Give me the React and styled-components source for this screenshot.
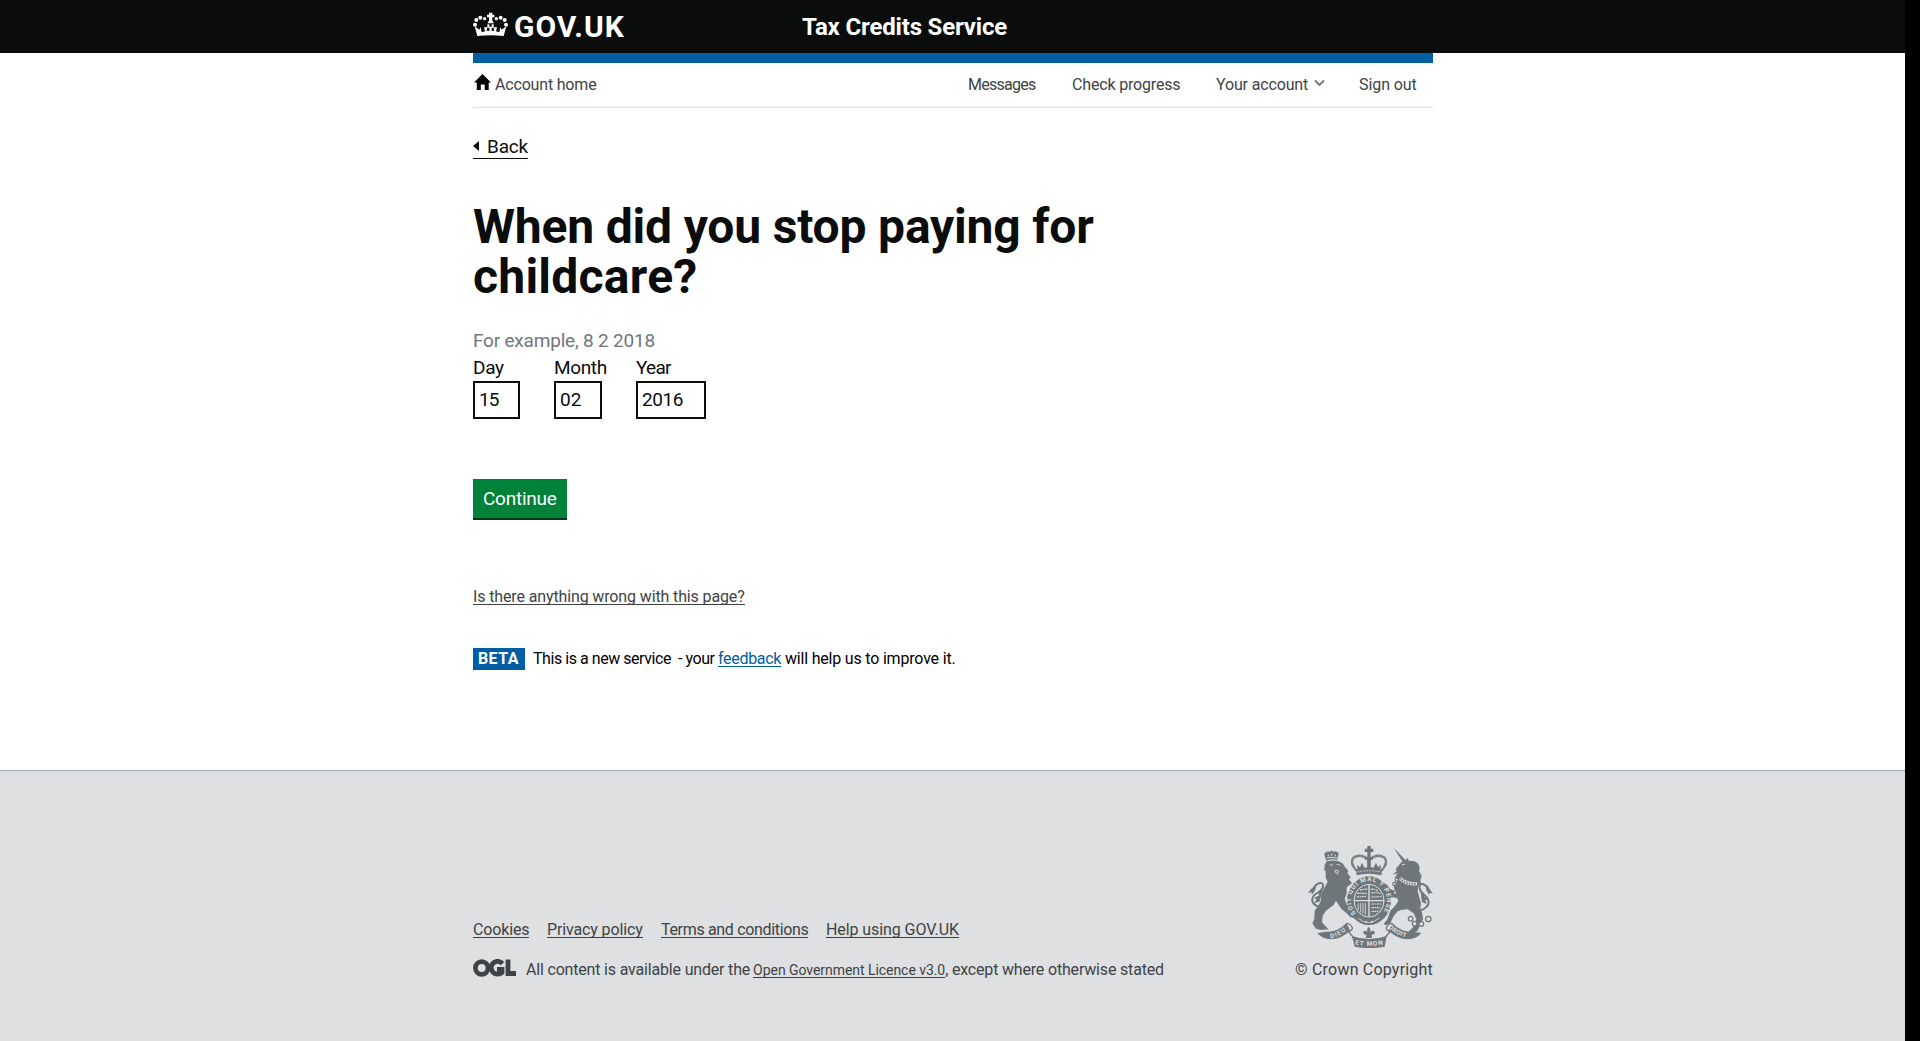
import React from "react";
import styled, { createGlobalStyle } from "styled-components";

const Global = createGlobalStyle`
  *, *::before, *::after { box-sizing: border-box; }
  body { margin: 0; background: #fff; }
`;

const Screen = styled.div`
  display: grid;
  grid-template-columns: 1fr 15px;
  height: 1041px;
  overflow: hidden;
  font-family: Roboto, "Liberation Sans", sans-serif;
  font-size: 16px;
  color: #0b0c0c;
  background: #fff;
`;
const ScrollTrack = styled.div`background: #000;`;
const Page = styled.div`
  display: flex;
  flex-direction: column;
  min-width: 0;
`;
const Container = styled.div`
  width: 960px;
  margin: 0 472px 0 473px;
`;

const T = styled.span`
  letter-spacing: ${(p) => p.$track || 0}px;
  white-space: pre;
`;

const Header = styled.header`
  background: #0b0c0c;
  height: 53px;
`;
const HeaderRow = styled(Container)`
  display: grid;
  grid-template-columns: 329px 1fr;
  height: 53px;
  color: #fff;
  font-weight: 700;
`;
const Logo = styled.div`
  display: flex;
  gap: 6px;
  font-size: 30px;
  line-height: 54px;
  svg { display: block; margin-top: 12px; flex: none; }
`;
const ServiceName = styled.div`
  font-size: 24px;
  line-height: 54px;
`;
const BlueBar = styled.div`
  height: 10px;
  background: #005ea5;
`;
const Nav = styled.nav`
  display: grid;
  grid-template-columns: 495px 104px 144px 143px 74px;
  height: 45px;
  border-bottom: 1px solid #dee0e2;
  line-height: 43px;
  color: #404345;
`;
const NavItem = styled.div`
  display: flex;
  svg { display: block; flex: none; }
`;
const HomeItem = styled(NavItem)`
  gap: 4px;
  svg { margin: 11px 0 0 1px; }
`;
const MenuItem = styled(NavItem)`
  gap: 6px;
  svg { margin-top: 16px; }
`;

const Main = styled.main`
  height: 662px;
  padding-top: 25px;
`;
const BackLink = styled.div`
  display: flex;
  gap: 8px;
  width: 55px;
  height: 26px;
  font-size: 19px;
  line-height: 27px;
  border-bottom: 1px solid #0b0c0c;
  svg { display: block; flex: none; margin-top: 8px; }
`;
const Title = styled.h1`
  margin: 43px 0 0;
  font-size: 48px;
  line-height: 50px;
  font-weight: 700;
`;
const TitleLine = styled(T)`
  display: block;
`;
const Hint = styled.div`
  margin-top: 25px;
  font-size: 19px;
  line-height: 27px;
  color: #6f777b;
`;
const DateRow = styled.div`
  display: grid;
  grid-template-columns: 81px 82px 70px;
  font-size: 19px;
  line-height: 27px;
`;
const Field = styled.label`
  display: block;
`;
const Box = styled.div`
  width: ${(p) => p.$w}px;
  height: 38px;
  padding-left: 4px;
  border: 2px solid #0b0c0c;
  line-height: 33px;
`;
const Button = styled.div`
  width: 94px;
  height: 39px;
  margin-top: 60px;
  padding-left: 10px;
  background: #00823b;
  box-shadow: 0 2px 0 #003618;
  color: #fff;
  font-size: 19px;
  line-height: 40px;
`;
const Line = styled.div`
  width: fit-content;
  height: 17px;
  line-height: 17px;
  border-bottom: 1px solid;
`;
const Help = styled(Line)`
  margin-top: 70px;
  color: #404345;
`;
const BetaRow = styled.div`
  display: flex;
  margin-top: 43px;
  line-height: 22px;
  color: #000;
`;
const Tag = styled.strong`
  width: 52px;
  height: 22px;
  margin-right: 8px;
  padding-left: 5px;
  background: #005ea5;
  color: #fff;
`;
const Feedback = styled.span`
  color: #005ea5;
  height: 19px;
  border-bottom: 1px solid;
`;

const Footer = styled.footer`
  flex: 1;
  background: #dee0e2;
  border-top: 1px solid #a1acb2;
  color: #404345;
`;
const FooterRow = styled(Container)`
  display: flex;
  justify-content: space-between;
  padding-top: 75px;
`;
const FooterLeft = styled.div`padding-top: 75px;`;
const Links = styled.div`
  display: grid;
  grid-template-columns: 74px 114px 165px 140px;
`;
const Licence = styled.div`
  display: flex;
  margin-top: 19px;
  line-height: 25px;
  svg { display: block; margin: 2px 10px 0 0; }
`;
const LicenceLink = styled.span`
  height: 21px;
  margin-left: 3px;
  font-size: 14px;
  line-height: 26px;
  border-bottom: 1px solid;
`;
const Copyright = styled.div`
  display: flex;
  flex-direction: column;
  align-items: flex-end;
  line-height: 25px;
  svg { display: block; margin-bottom: 9px; }
`;

function Crown() {
  return (
    <svg width="35" height="26" viewBox="0 0 105 78" fill="#fff">
      <path d="M13 72 5 43l14 10 4-8 3 16 10-3-3-12h10l-2 10 8 1V47h-6V37h6v7h7v-7h6v10h-6v10l8-1-2-10h10l-3 12 10 3 3-16 4 8 14-10-8 29Q53 67 13 72z" />
      <path d="M48 2h10v6h6v8h-6v10l5 8H43l5-8V16h-6V8h6z" />
      <g>
        <circle cx="6" cy="38" r="6" /><circle cx="10" cy="24" r="6" /><circle cx="22" cy="17" r="6" /><circle cx="35" cy="20" r="5" />
        <circle cx="99" cy="38" r="6" /><circle cx="95" cy="24" r="6" /><circle cx="83" cy="17" r="6" /><circle cx="70" cy="20" r="5" />
      </g>
    </svg>
  );
}
function House() {
  return (
    <svg width="17" height="16" viewBox="0 0 17 16"><path fill="#000" d="M8.500 0 17 8.500h-2.300V16h-4v-5.500H6.800V16h-4V8.500H0z" /></svg>
  );
}
function Ogl() {
  return (
    <svg width="43" height="18" viewBox="0 0 43 18" fill="none" stroke="#404345" strokeWidth="4.800">
      <circle cx="8.700" cy="9" r="6.300" />
      <path d="M29.500 4.600A6.400 6.400 0 1 0 29 13.400V10.500h-5" />
      <path d="M35 .5v14h8" />
    </svg>
  );
}
function Crest() {
  return (
    <svg width="125" height="102" viewBox="84 48 375 306" fill="#6f777b">
      {/* lion */}
      <g>
        <path d="M139 92l-6-18q-1-8 8-8 2-4 8 0l4-4 4 0 4 4q7-4 9 0 8 0 5 9l-4 15q-16-5-32 2z" />
        <path d="M134 104l6-10q18-5 35-1l14 8 6 10 10 12-3 6 10 13-5 6 9 12-16 12 0 18-6 16 4 12 6 12 12 12 16 6 12 10-8 8-24-4-14-14-14-12-16-24-8 14-22 16-10 16-2 18 6 8 14 14-24 2-14-4-11-16 6-14 1-24 12-16 6-12 2-24 10-18 9-16-6-14 0-20-4 0z" />
        <path d="M118 232C82 216 98 196 116 186S134 150 112 162Q102 168 99 182" fill="none" stroke="#6f777b" strokeWidth="6" />
        <path d="M84 190l8-12 16-12-2 14-10 14-2-8z" />
        <path d="M128 180l-14 10 4 6-16 8 8 4-8 10 16-2z" />
      </g>
      <path d="M148 106q6-4 11 0M170 104q7-3 11 3M166 120l9 2-2 10-8-6z" stroke="#dee0e2" strokeWidth="2.500" fill="none" />
      <path d="M140 84q15-4 31 0M145 74v5M155 70v7M166 74v5" stroke="#dee0e2" strokeWidth="3" fill="none" />
      {/* unicorn */}
      <g>
        <path d="M341 53l38 40-8 7z" />
        <path d="M350 124l-3-8 18-20 12-4 4-9 6 9q20-1 28 10l4 12-2 8 8 16-4 12 2 8-8 10-2 16 4 14 6 22-2 16 6 16 2 16-8 14-8 20-18 8-10-4 14-14 10-24-8-18-18-12-20 2-10 4-12 14-10 22-14 6-6-4 12-16 8-24 16-16 8-14-4-8-16-2-16 8-6 12-10-6 2-12 22-12-18-6-8-16-8-4 6-8 20 4 12 16 14 4-4-12 10-14-6-14 8-12-16 4z" />
        <path d="M420 242C460 226 446 206 430 192S414 152 436 166Q446 172 446 184" fill="none" stroke="#6f777b" strokeWidth="6" />
        <path d="M459 192l-8-12-14-14 2 14 8 14 4-6z" />
        <path d="M422 186l12 8-2 6 12 8-8 2 4 12-14-6z" />
      </g>
      <path d="M359 145q22 20 52 16" stroke="#dee0e2" strokeWidth="10" fill="none" />
      <path d="M359 145q22 20 52 16" stroke="#6f777b" strokeWidth="6" strokeDasharray="4 4" fill="none" />
      <path d="M366 105l9-3" stroke="#dee0e2" strokeWidth="3" />
      <g fill="#dee0e2" stroke="#6f777b" strokeWidth="3.500">
        <circle cx="392" cy="266" r="7" /><circle cx="404" cy="281" r="7" /><circle cx="424" cy="282" r="7" /><circle cx="445" cy="267" r="8" />
        <circle cx="350" cy="149" r="5" /><circle cx="343" cy="162" r="5" /><circle cx="345" cy="188" r="5" />
      </g>
      {/* crown */}
      <path d="M230 122q-22-24-10-39 24-14 46 7v30M304 122q22-24 10-39-24-14-46 7v30" fill="none" stroke="#6f777b" strokeWidth="7" />
      <path d="M230 122q-22-24-10-39 24-14 46 7M304 122q22-24 10-39-24-14-46 7" fill="none" stroke="#dee0e2" strokeWidth="1.800" strokeDasharray="2 4" />
      <path d="M262 48h10v8h8v10h-8v16h6v8h-6v30h-10V90h-6v-8h6V66h-8V56h8z" />
      <path d="M232 122l0-18 8 8 6-14 8 16 13-5 13 5 8-16 6 14 8-8v18z" />
      <path d="M228 121q40-9 78 0l-2 15q-36-9-74 0z" />
      <path d="M232 126q36-8 70 0" stroke="#dee0e2" strokeWidth="2.500" strokeDasharray="6 3" fill="none" />
      {/* garter and shield */}
      <ellipse cx="267" cy="212" rx="66" ry="73" />
      <ellipse cx="267" cy="212" rx="45" ry="49" fill="none" stroke="#dee0e2" strokeWidth="3" />
      <path d="M267 164v96M223 212h88" stroke="#dee0e2" strokeWidth="4" />
      <g stroke="#dee0e2" strokeWidth="3.500" strokeDasharray="7 2 4 2" fill="none">
        <path d="M240 180l22-3M232 190l28 0M230 201l30-2M272 178q14-2 22 6M274 190q14-6 29 2M274 201l32-1" />
        <path d="M275 222h31M275 233h27M275 244h20" />
      </g>
      <path d="M235 220v20M242 219v28M249 219v32M256 219v34" stroke="#dee0e2" strokeWidth="2.500" />
      <path d="M236 266q30 24 62-2" stroke="#dee0e2" strokeWidth="2.500" fill="none" />
      <circle cx="258" cy="276" r="3" fill="#dee0e2" /><circle cx="276" cy="276" r="3" fill="#dee0e2" />
      {/* ribbon */}
      <path d="M112 309l26-4q34 2 62-27l10 24q-24 24-58 26-26-2-40-19zM424 309l-26-4q-34 2-62-27l-10 24q24 24 58 26 26-2 40-19z" />
      <path d="M201 279q18 8 16 18l-10 10q10 10 12 16M335 279q-18 8-16 18l10 10q-10 10-12 16" fill="none" stroke="#6f777b" strokeWidth="4" />
      <path d="M216 318q50 18 104 0l-6 32q-45 9-90 0z" />
      <path d="M266 290q8 8 4 18 6-10 14-3 2 9-9 9l1 10h-18l1-10q-11 0-9-9 8-7 13 3-5-10 3-18z" />
      <defs>
        <path id="motto" d="M228 250A54 57 0 1 1 306 250" />
        <path id="dieu" d="M152 325Q180 320 205 296" />
        <path id="droit" d="M325 293Q350 317 388 325" />
        <path id="mon" d="M225 343Q268 352 314 343" />
      </defs>
      <g fill="#dee0e2" fontFamily="Roboto, sans-serif" fontWeight="700" fontSize="19">
        <text><textPath href="#motto" textLength="252">SOIT QUI MAL Y PENSE</textPath></text>
        <text><textPath href="#dieu" textLength="52">DIEU</textPath></text>
        <text><textPath href="#droit" textLength="60">DROIT</textPath></text>
        <text><textPath href="#mon" textLength="84">ET MON</textPath></text>
      </g>
    </svg>
  );
}

export default function App() {
  return (
    <Screen>
      <Global />
      <Page>
        <Header>
          <HeaderRow>
            <Logo><Crown /><T $track={1}>GOV.UK</T></Logo>
            <ServiceName><T $track={-0.17}>Tax Credits Service</T></ServiceName>
          </HeaderRow>
        </Header>
        <Container>
          <BlueBar />
          <Nav>
            <HomeItem><House /><T $track={-0.18}>Account home</T></HomeItem>
            <NavItem><T $track={-0.72}>Messages</T></NavItem>
            <NavItem><T $track={-0.17}>Check progress</T></NavItem>
            <MenuItem>
              <T $track={-0.15}>Your account</T>
              <svg width="11" height="8" viewBox="0 0 11 8" fill="none" stroke="#6f777b" strokeWidth="1.800"><path d="m1 1.500 4.500 4.500L10 1.500" /></svg>
            </MenuItem>
            <NavItem><T $track={-0.08}>Sign out</T></NavItem>
          </Nav>
          <Main>
            <BackLink>
              <svg width="6" height="10" viewBox="0 0 6 10"><path fill="#0b0c0c" d="M6 0v10L0 5z" /></svg>
              <T $track={-0.2}>Back</T>
            </BackLink>
            <Title>
              <TitleLine $track={-0.18}>When did you stop paying for</TitleLine>
              <TitleLine $track={0.25}>childcare?</TitleLine>
            </Title>
            <Hint><T $track={-0.2}>For example, 8 2 2018</T></Hint>
            <DateRow>
              <Field><T $track={-0.3}>Day</T><Box $w={47}><T $track={-0.9}>15</T></Box></Field>
              <Field><T $track={-0.35}>Month</T><Box $w={48}><T>02</T></Box></Field>
              <Field><T $track={-0.75}>Year</T><Box $w={70}><T $track={-0.4}>2016</T></Box></Field>
            </DateRow>
            <Button><T $track={-0.25}>Continue</T></Button>
            <Help><T $track={-0.13}>Is there anything wrong with this page?</T></Help>
            <BetaRow>
              <Tag><T $track={0.4}>BETA</T></Tag>
              <T $track={-0.45}>{"This is a new service  - your "}</T>
              <Feedback><T $track={-0.3}>feedback</T></Feedback>
              <T $track={-0.19}>{" will help us to improve it."}</T>
            </BetaRow>
          </Main>
        </Container>
        <Footer>
          <FooterRow>
            <FooterLeft>
              <Links>
                <Line><T $track={-0.15}>Cookies</T></Line>
                <Line><T $track={-0.13}>Privacy policy</T></Line>
                <Line><T $track={-0.33}>Terms and conditions</T></Line>
                <Line><T $track={-0.08}>Help using GOV.UK</T></Line>
              </Links>
              <Licence>
                <Ogl />
                <T $track={-0.18}>All content is available under the</T>
                <LicenceLink><T $track={-0.05}>Open Government Licence v3.0</T></LicenceLink>
                <T $track={-0.18}>, except where otherwise stated</T>
              </Licence>
            </FooterLeft>
            <Copyright>
              <Crest />
              <T $track={0.2}>© Crown Copyright</T>
            </Copyright>
          </FooterRow>
        </Footer>
      </Page>
      <ScrollTrack />
    </Screen>
  );
}
